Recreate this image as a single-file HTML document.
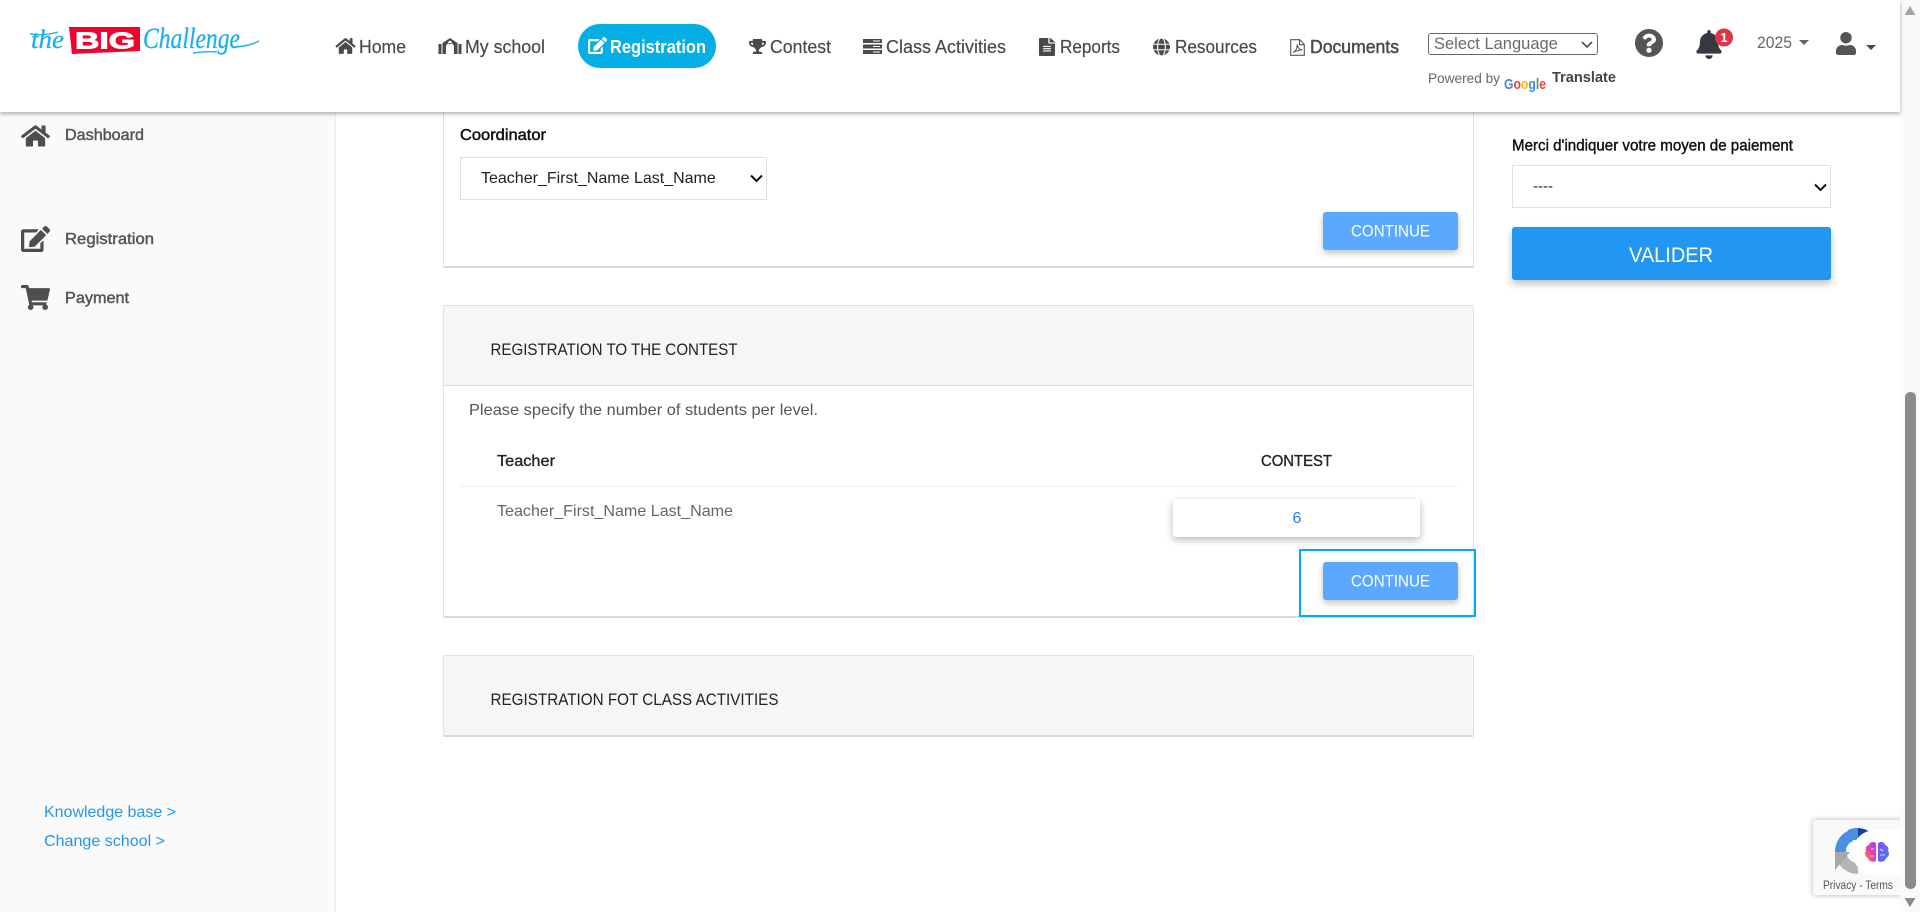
<!DOCTYPE html>
<html lang="en">
<head>
<meta charset="utf-8">
<title>The Big Challenge - Registration</title>
<style>
html,body{margin:0;padding:0;width:1920px;height:912px;overflow:hidden;background:#fff;font-family:"Liberation Sans",sans-serif}
.a{position:absolute;box-sizing:border-box}
select{position:absolute;box-sizing:border-box;font-family:"Liberation Sans",sans-serif;background:#fff;outline:none;margin:0;appearance:none;-webkit-appearance:none}
.panel{background:#fff;border:1px solid #e2e2e2;border-bottom:2px solid #d9d9d9;border-radius:2px}
.btn{background:#5ba8ff;border-radius:3px;box-shadow:0 3px 7px rgba(0,0,0,.25)}
svg text{font-family:"Liberation Sans",sans-serif;white-space:pre}
</style>
</head>
<body>
<!-- sidebar -->
<div class="a" style="left:0;top:112px;width:336px;height:800px;background:#fafafa;border-right:1px solid #d8f3fa"></div>
<!-- panels -->
<div class="a panel" style="left:443px;top:100px;width:1031px;height:168px"></div>
<div class="a panel" style="left:443px;top:305px;width:1031px;height:313px"></div>
<div class="a" style="left:444px;top:306px;width:1029px;height:80px;background:#f6f6f6;border-bottom:1px solid #dedede;border-radius:2px 2px 0 0"></div>
<div class="a panel" style="left:443px;top:655px;width:1031px;height:82px;background:#f6f6f6"></div>
<div class="a" style="left:460px;top:486px;width:998px;height:1px;background:#eee"></div>
<select style="left:460px;top:157px;width:307px;height:43px;border:1px solid #e0e0e0;font-size:16px;color:#222;padding-left:20px;border-radius:0"><option>Teacher_First_Name Last_Name</option></select>
<div class="a btn" style="left:1323px;top:212px;width:135px;height:38px"></div>
<div class="a" style="left:1173px;top:499px;width:247px;height:38px;background:#fff;border-radius:3px;box-shadow:0 3px 8px rgba(0,0,0,.28)"></div>
<div class="a btn" style="left:1323px;top:562px;width:135px;height:38px"></div>
<div class="a" style="left:1299px;top:549px;width:177px;height:68px;border:2px solid #00a9ff"></div>
<!-- right col -->
<select style="left:1512px;top:165px;width:319px;height:43px;border:1px solid #e0e0e0;font-size:15px;color:#222;padding-left:20px;border-radius:0"><option>----</option></select>
<div class="a" style="left:1512px;top:227px;width:319px;height:53px;background:#2196f3;border-radius:3px;box-shadow:0 4px 8px rgba(0,0,0,.25)"></div>
<!-- recaptcha -->
<div class="a" style="left:1813px;top:820px;width:100px;height:75px;background:#f9f9f9;border-radius:3px 0 0 3px;box-shadow:0 0 6px rgba(0,0,0,.3)"></div>
<!-- scrollbar -->
<div class="a" style="left:1900px;top:0;width:20px;height:912px;background:#fafafa"></div>
<div class="a" style="left:1905px;top:392px;width:11px;height:497px;background:#8b8b8b;border-radius:5px"></div>
<!-- header -->
<div class="a" style="left:0;top:0;width:1900px;height:112px;background:#fff;box-shadow:0 2px 4px rgba(0,0,0,.3)"></div>
<div class="a" style="left:578px;top:24px;width:138px;height:44px;background:#05aee4;border-radius:22px"></div>
<select style="left:1428px;top:33px;width:170px;height:22px;border:1px solid #666;border-radius:3px;font-size:16.5px;color:#6a6a6a;padding:0 0 0 5px"><option>Select Language</option></select>

<svg class="a" style="left:0;top:0;pointer-events:none" width="1920" height="912" viewBox="0 0 1920 912" xmlns="http://www.w3.org/2000/svg">
<defs>
<linearGradient id="br" x1="0" x2="1" y1="1" y2="0"><stop offset="0" stop-color="#ff9a1f"/><stop offset=".45" stop-color="#f13fa8"/><stop offset="1" stop-color="#a044ee"/></linearGradient>
<linearGradient id="br2" x1="0" x2="1" y1="0" y2="1"><stop offset="0" stop-color="#8a4df0"/><stop offset="1" stop-color="#3f7df5"/></linearGradient>
</defs>
<!-- select chevrons -->
<g fill="none" stroke="#111" stroke-width="2">
<path d="M751 175.500l5.500 5.500 5.500-5.500"/>
<path d="M1815 184.500l5.500 5.500 5.500-5.500"/>
</g>
<path d="M1582 42l5 5 5-5" fill="none" stroke="#555" stroke-width="1.800"/>
<!-- logo -->
<polygon points="69,27 140,27 140,51 72,54" fill="#f0042f"/>
<text x="75" y="48.500" font-size="23" font-weight="700" fill="#fff" stroke="#fff" stroke-width=".9" textLength="60" lengthAdjust="spacingAndGlyphs">BIG</text>
<text x="31" y="48" font-size="26" font-style="italic" fill="#1fb0e8" stroke="#1fb0e8" stroke-width=".3" style="font-family:'Liberation Serif',serif" textLength="33" lengthAdjust="spacingAndGlyphs">the</text>
<text x="143" y="48" font-size="30" font-style="italic" fill="#1fb0e8" stroke="#1fb0e8" stroke-width=".3" style="font-family:'Liberation Serif',serif" textLength="97" lengthAdjust="spacingAndGlyphs">Challenge</text>
<path d="M233 47Q247 47 259 41M193 53Q205 51 217 52M30 34Q45 36 58 32" fill="none" stroke="#1fb0e8" stroke-width="1.400"/>

<!-- nav icons -->
<g fill="#4a4a4a">
<svg x="335" y="37" width="21" height="18" viewBox="0 0 576 512"><path d="M280.370 148.260L96 300.110V464a16 16 0 0 0 16 16l112.060-.29a16 16 0 0 0 15.920-16V368a16 16 0 0 1 16-16h64a16 16 0 0 1 16 16v95.640a16 16 0 0 0 16 16.050L464 480a16 16 0 0 0 16-16V300L295.670 148.260a12.190 12.190 0 0 0-15.300 0zM571.600 251.470L488 182.560V44.050a12 12 0 0 0-12-12h-56a12 12 0 0 0-12 12v72.610L318.470 43a48 48 0 0 0-61 0L4.340 251.470a12 12 0 0 0-1.600 16.900l25.500 31A12 12 0 0 0 45.150 301l235.220-193.740a12.190 12.190 0 0 1 15.300 0L530.900 301a12 12 0 0 0 16.900-1.600l25.500-31a12 12 0 0 0-1.700-16.930z"/></svg>
<path fill-rule="evenodd" d="M438.500 44h3v10h-3zM458.500 44h3v10h-3zM450 38l7.500 5v11H454v-7a4 4 0 0 0-8 0v7h-3.500V43zM450 40.800a1.700 1.700 0 1 0 .01 0z"/>
<svg x="749" y="39" width="17" height="15" viewBox="0 0 576 512"><path d="M552 64H448V24c0-13.300-10.700-24-24-24H152c-13.300 0-24 10.700-24 24v40H24C10.700 64 0 74.700 0 88v56c0 35.700 22.500 72.400 61.900 100.700 31.500 22.700 69.800 37.100 110 41.700C203.300 338.500 240 360 240 360v72h-48c-35.300 0-64 20.700-64 56v12c0 6.600 5.400 12 12 12h296c6.600 0 12-5.400 12-12v-12c0-35.300-28.700-56-64-56h-48v-72s36.700-21.500 68.100-73.600c40.300-4.600 78.700-19 110-41.700 39.300-28.300 61.900-65 61.900-100.700V88c0-13.300-10.700-24-24-24zM99.300 192.800C74.900 175.200 64 155.600 64 144v-16h64.200c1 32.600 5.800 61.200 12.800 86.200-15.100-5.200-29.200-12.400-41.700-21.400zM512 144c0 16.100-17.700 36.100-35.300 48.800-12.500 9-26.700 16.200-41.800 21.400 7-25 11.800-53.600 12.800-86.200H512v16z"/></svg>
<path fill-rule="evenodd" d="M863 39h19v4h-19zM863 44.500h19v4h-19zM863 50h19v4h-19zM873 40.500v1h7v-1zM873 46v1h7v-1zM873 51.500v1h7v-1z"/>
<svg x="1039" y="38" width="16" height="18" viewBox="0 0 384 512" preserveAspectRatio="none"><path d="M224 136V0H24C10.700 0 0 10.700 0 24v464c0 13.300 10.700 24 24 24h336c13.300 0 24-10.700 24-24V160H248c-13.200 0-24-10.800-24-24zm64 236c0 6.600-5.400 12-12 12H108c-6.600 0-12-5.400-12-12v-8c0-6.600 5.400-12 12-12h168c6.600 0 12 5.400 12 12v8zm0-64c0 6.600-5.400 12-12 12H108c-6.600 0-12-5.400-12-12v-8c0-6.600 5.400-12 12-12h168c6.600 0 12 5.400 12 12v8zm0-72v8c0 6.600-5.400 12-12 12H108c-6.600 0-12-5.400-12-12v-8c0-6.600 5.400-12 12-12h168c6.600 0 12 5.400 12 12zm96-114.100v6.100H256V0h6.100c6.400 0 12.500 2.500 17 7l97.900 98c4.500 4.500 7 10.600 7 16.900z"/></svg>
<svg x="1153" y="38" width="17" height="18" viewBox="0 0 496 512"><path d="M336.500 160C322 70.700 287.800 8 248 8s-74 62.700-88.500 152h177zM152 256c0 22.200 1.200 43.500 3.300 64h185.300c2.100-20.500 3.300-41.800 3.300-64s-1.200-43.500-3.300-64H155.300c-2.100 20.500-3.300 41.800-3.300 64zm324.700-96c-28.600-67.900-86.500-120.400-158-141.600 24.400 33.800 41.200 84.700 50 141.600h108zM177.200 18.400C105.800 39.600 47.800 92.100 19.300 160h108c8.700-56.900 25.500-107.800 49.900-141.600zM487.400 192H372.700c2.100 21 3.300 42.500 3.300 64s-1.200 43-3.300 64h114.600c5.500-20.500 8.600-41.800 8.600-64s-3.100-43.500-8.500-64zM120 256c0-21.500 1.200-43 3.300-64H8.600C3.200 212.500 0 233.800 0 256s3.200 43.500 8.600 64h114.600c-2-21-3.200-42.500-3.200-64zm39.500 96c14.500 89.300 48.700 152 88.500 152s74-62.700 88.500-152h-177zm159.300 141.600c71.400-21.200 129.400-73.700 158-141.600h-108c-8.800 56.900-25.600 107.800-50 141.600zM19.300 352c28.600 67.900 86.500 120.400 158 141.600-24.400-33.800-41.200-84.700-50-141.600h-108z"/></svg>
</g>
<path d="M1290.700 39.700h9l4.600 4.600v11h-13.600zM1299.500 39.700v5h5M1293 52.500c2.500-1 4-4 4.300-8 .3 3.500 2 5 5 5.500-3.500 0-6.500 1-9.300 2.500z" fill="none" stroke="#555" stroke-width="1.100"/>
<svg x="588" y="37" width="19" height="17" viewBox="0 0 576 512"><path fill="#fff" d="M402.600 83.200l90.200 90.200c3.800 3.800 3.800 10 0 13.800L274.400 405.600l-92.800 10.300c-12.400 1.400-22.900-9.100-21.500-21.500l10.300-92.800L388.800 83.200c3.800-3.800 10-3.800 13.800 0zm162-22.900l-48.800-48.800c-15.200-15.200-39.900-15.200-55.200 0l-35.400 35.400c-3.800 3.800-3.800 10 0 13.800l90.200 90.200c3.800 3.800 10 3.800 13.800 0l35.400-35.400c15.200-15.300 15.200-40 0-55.200zM384 346.200V448H64V128h229.800c3.200 0 6.200-1.300 8.500-3.500l40-40c7.600-7.600 2.200-20.500-8.500-20.500H48C21.500 64 0 85.500 0 112v352c0 26.500 21.500 48 48 48h352c26.500 0 48-21.500 48-48V306.200c0-10.700-12.900-16-20.500-8.500l-40 40c-2.200 2.300-3.500 5.300-3.500 8.500z"/></svg>

<!-- nav text -->
<g font-size="18" fill="#4a4a4a" stroke="#4a4a4a" stroke-width=".2">
<text x="359" y="53" textLength="47" lengthAdjust="spacingAndGlyphs">Home</text>
<text x="465" y="53" textLength="80" lengthAdjust="spacingAndGlyphs">My school</text>
<text x="770" y="53" textLength="61" lengthAdjust="spacingAndGlyphs">Contest</text>
<text x="886" y="53" textLength="120" lengthAdjust="spacingAndGlyphs">Class Activities</text>
<text x="1060" y="53" textLength="60" lengthAdjust="spacingAndGlyphs">Reports</text>
<text x="1175" y="53" textLength="82" lengthAdjust="spacingAndGlyphs">Resources</text>
<text x="1310" y="53" textLength="89" lengthAdjust="spacingAndGlyphs" stroke-width=".5">Documents</text>
</g>
<text x="610" y="53" font-size="18" font-weight="700" fill="#fff" textLength="96" lengthAdjust="spacingAndGlyphs">Registration</text>

<!-- translate -->
<text x="1428" y="83" font-size="14" fill="#666" textLength="72" lengthAdjust="spacingAndGlyphs">Powered by</text>
<text x="1504" y="89" font-size="15" font-weight="700" textLength="42" lengthAdjust="spacingAndGlyphs"><tspan fill="#4285f4">G</tspan><tspan fill="#ea4335">o</tspan><tspan fill="#fbbc05">o</tspan><tspan fill="#4285f4">g</tspan><tspan fill="#34a853">l</tspan><tspan fill="#ea4335">e</tspan></text>
<text x="1552" y="82" font-size="14.500" font-weight="700" fill="#444" textLength="64" lengthAdjust="spacingAndGlyphs">Translate</text>

<!-- right header -->
<svg x="1635" y="29" width="28" height="28" viewBox="8 8 496 496" preserveAspectRatio="none"><path fill="#555" d="M504 256c0 136.997-111.043 248-248 248S8 392.997 8 256C8 119.083 119.043 8 256 8s248 111.083 248 248zM262.655 90c-54.497 0-89.255 22.957-116.549 63.758-3.536 5.286-2.353 12.415 2.715 16.258l34.699 26.310c5.205 3.947 12.621 3.008 16.665-2.122 17.864-22.658 30.113-35.797 57.303-35.797 20.429 0 45.698 13.148 45.698 32.958 0 14.976-12.363 22.667-32.534 33.976C247.128 238.528 216 254.941 216 296v4c0 6.627 5.373 12 12 12h56c6.627 0 12-5.373 12-12v-1.333c0-28.462 83.186-29.647 83.186-106.667 0-58.002-60.165-102-116.531-102zM256 338c-25.365 0-46 20.635-46 46 0 25.364 20.635 46 46 46s46-20.636 46-46c0-25.365-20.635-46-46-46z"/></svg>
<svg x="1696" y="30" width="26" height="29" viewBox="0 0 448 512"><path fill="#343a40" d="M224 512c35.320 0 63.970-28.650 63.970-64H160.030c0 35.350 28.650 64 63.970 64zm215.390-149.710c-19.320-20.760-55.470-51.990-55.470-154.290 0-77.700-54.480-139.900-127.940-155.160V32c0-17.670-14.320-32-31.980-32s-31.980 14.330-31.980 32v20.840C118.560 68.100 64.080 130.300 64.080 208c0 102.300-36.150 133.530-55.470 154.290-6 6.450-8.660 14.160-8.610 21.710.110 16.400 12.980 32 32.100 32h383.800c19.120 0 32-15.600 32.100-32 .050-7.550-2.610-15.270-8.610-21.710z"/></svg>
<circle cx="1724" cy="37.500" r="9" fill="#dc3545"/>
<text x="1724" y="42" font-size="12.500" font-weight="700" fill="#fff" text-anchor="middle">1</text>
<text x="1757" y="48" font-size="17" fill="#666" textLength="35" lengthAdjust="spacingAndGlyphs">2025</text>
<polygon points="1799,40 1809,40 1804,45" fill="#666"/>
<svg x="1836" y="32" width="20" height="23" viewBox="0 0 448 512" preserveAspectRatio="none"><path fill="#555" d="M224 256c70.700 0 128-57.300 128-128S294.700 0 224 0 96 57.300 96 128s57.300 128 128 128zm89.600 32h-16.700c-22.200 10.200-46.900 16-72.900 16s-50.600-5.800-72.900-16h-16.700C60.200 288 0 348.200 0 422.400V464c0 26.500 21.500 48 48 48h352c26.500 0 48-21.500 48-48v-41.600c0-74.200-60.200-134.400-134.400-134.400z"/></svg>
<polygon points="1866,45 1876,45 1871,50" fill="#4a4a4a"/>

<!-- sidebar -->
<g fill="#4f4f4f">
<svg x="21" y="124" width="29" height="24" viewBox="0 0 576 512" preserveAspectRatio="none"><path d="M280.370 148.260L96 300.110V464a16 16 0 0 0 16 16l112.060-.29a16 16 0 0 0 15.920-16V368a16 16 0 0 1 16-16h64a16 16 0 0 1 16 16v95.640a16 16 0 0 0 16 16.050L464 480a16 16 0 0 0 16-16V300L295.670 148.260a12.190 12.190 0 0 0-15.300 0zM571.600 251.470L488 182.560V44.050a12 12 0 0 0-12-12h-56a12 12 0 0 0-12 12v72.610L318.470 43a48 48 0 0 0-61 0L4.340 251.470a12 12 0 0 0-1.600 16.900l25.500 31A12 12 0 0 0 45.150 301l235.220-193.740a12.190 12.190 0 0 1 15.300 0L530.900 301a12 12 0 0 0 16.900-1.600l25.500-31a12 12 0 0 0-1.700-16.930z"/></svg>
<svg x="21" y="226" width="29" height="26" viewBox="0 0 576 512" preserveAspectRatio="none"><path d="M402.600 83.200l90.200 90.200c3.800 3.800 3.800 10 0 13.800L274.400 405.600l-92.800 10.300c-12.400 1.400-22.900-9.100-21.500-21.500l10.300-92.800L388.800 83.200c3.800-3.800 10-3.800 13.800 0zm162-22.900l-48.800-48.800c-15.200-15.200-39.900-15.200-55.200 0l-35.400 35.400c-3.800 3.800-3.800 10 0 13.800l90.200 90.200c3.800 3.800 10 3.800 13.800 0l35.400-35.400c15.200-15.300 15.200-40 0-55.200zM384 346.200V448H64V128h229.800c3.200 0 6.200-1.300 8.500-3.500l40-40c7.600-7.600 2.200-20.500-8.500-20.500H48C21.500 64 0 85.500 0 112v352c0 26.500 21.500 48 48 48h352c26.500 0 48-21.500 48-48V306.200c0-10.700-12.900-16-20.500-8.500l-40 40c-2.200 2.300-3.500 5.300-3.500 8.500z"/></svg>
<svg x="21" y="285" width="29" height="25" viewBox="0 0 576 512" preserveAspectRatio="none"><path d="M528.120 301.319l47.273-208C578.806 78.301 567.391 64 551.990 64H159.208l-9.166-44.810C147.758 8.021 137.930 0 126.529 0H24C10.745 0 0 10.745 0 24v16c0 13.255 10.745 24 24 24h69.883l70.248 343.435C147.325 417.100 136 435.222 136 456c0 30.928 25.072 56 56 56s56-25.072 56-56c0-15.674-6.447-29.835-16.824-40h209.647C430.447 426.165 424 440.326 424 456c0 30.928 25.072 56 56 56s56-25.072 56-56c0-22.172-12.888-41.332-31.579-50.405l5.517-24.276c3.413-15.018-8.002-29.319-23.403-29.319H218.117l-6.545-32h293.145c11.206 0 20.920-7.754 23.403-18.681z"/></svg>
</g>
<g font-size="16" fill="#555" stroke="#555" stroke-width=".45">
<text x="65" y="140" textLength="79" lengthAdjust="spacingAndGlyphs">Dashboard</text>
<text x="65" y="244" textLength="89" lengthAdjust="spacingAndGlyphs">Registration</text>
<text x="65" y="303" textLength="64" lengthAdjust="spacingAndGlyphs">Payment</text>
</g>
<g font-size="16" fill="#2196f3">
<text x="44" y="817" textLength="132" lengthAdjust="spacingAndGlyphs">Knowledge base &gt;</text>
<text x="44" y="846" textLength="121" lengthAdjust="spacingAndGlyphs">Change school &gt;</text>
</g>

<!-- main text -->
<text x="460" y="140" font-size="16" fill="#111" stroke="#111" stroke-width=".5" textLength="86" lengthAdjust="spacingAndGlyphs">Coordinator</text>
<g font-size="16.500" fill="#fff">
<text x="1351" y="236.500" textLength="79" lengthAdjust="spacingAndGlyphs">CONTINUE</text>
<text x="1351" y="586.500" textLength="79" lengthAdjust="spacingAndGlyphs">CONTINUE</text>
</g>
<g font-size="16.500" fill="#222">
<text x="490.500" y="355" textLength="247" lengthAdjust="spacingAndGlyphs">REGISTRATION TO THE CONTEST</text>
<text x="490.500" y="705" textLength="288" lengthAdjust="spacingAndGlyphs">REGISTRATION FOT CLASS ACTIVITIES</text>
</g>
<text x="469" y="415" font-size="16" fill="#555" textLength="349" lengthAdjust="spacingAndGlyphs">Please specify the number of students per level.</text>
<text x="497" y="466" font-size="16" fill="#222" stroke="#222" stroke-width=".35" textLength="58" lengthAdjust="spacingAndGlyphs">Teacher</text>
<text x="1261" y="466" font-size="16" fill="#222" stroke="#222" stroke-width=".35" textLength="71" lengthAdjust="spacingAndGlyphs">CONTEST</text>
<text x="497" y="516" font-size="16" fill="#666" textLength="236" lengthAdjust="spacingAndGlyphs">Teacher_First_Name Last_Name</text>
<text x="1297" y="523" font-size="16" fill="#2979ff" text-anchor="middle">6</text>
<text x="1512" y="150.500" font-size="15.500" fill="#111" stroke="#111" stroke-width=".4" textLength="281" lengthAdjust="spacingAndGlyphs">Merci d'indiquer votre moyen de paiement</text>
<text x="1629" y="262" font-size="21" fill="#fff" textLength="84" lengthAdjust="spacingAndGlyphs">VALIDER</text>

<!-- scrollbar arrows -->
<polygon points="1910,6 1915.500,15 1904.500,15" fill="#a3a3a3"/>
<polygon points="1904.500,898 1915.500,898 1910,907" fill="#8b8b8b"/>

<!-- recaptcha -->
<path d="M1835 852a23 23 0 0 1 15-22l3 11a11 11 0 0 0-7 11z" fill="#4a90e2"/>
<path d="M1848 830a24 24 0 0 1 12-2v12h-8z" fill="#4a90e2"/>
<path d="M1858 828a24 24 0 0 1 12 4l-7 9-5-1z" fill="#1b3f96"/>
<path d="M1835 852h11a12 12 0 0 0 12 11v11a23 23 0 0 1-23-22z" fill="#b5b5b5"/>
<polygon points="1835,852 1850,852 1835,870" fill="#a8a8a8"/>
<path d="M1900 830h-25a22.500 22.500 0 0 0 0 45h25z" fill="#fff"/>
<path d="M1876 843c-4-2.500-7 0-7 2-3 .5-4 4-3 6-2 2-1 6 2 7 0 3 5 5 8 3z" fill="url(#br)"/>
<path d="M1878 843c4-2.500 7 0 7 2 3 .5 4 4 3 6 2 2 1 6-2 7 0 3-5 5-8 3z" fill="url(#br2)"/>
<path d="M1877 843v18M1871 849h3M1870 856h4M1880 849l3 2M1880 855h5" stroke="#fff" stroke-width=".8" fill="none"/>
<text x="1823" y="889" font-size="11.500" fill="#555" textLength="70" lengthAdjust="spacingAndGlyphs">Privacy - Terms</text>
</svg>
</body>
</html>
